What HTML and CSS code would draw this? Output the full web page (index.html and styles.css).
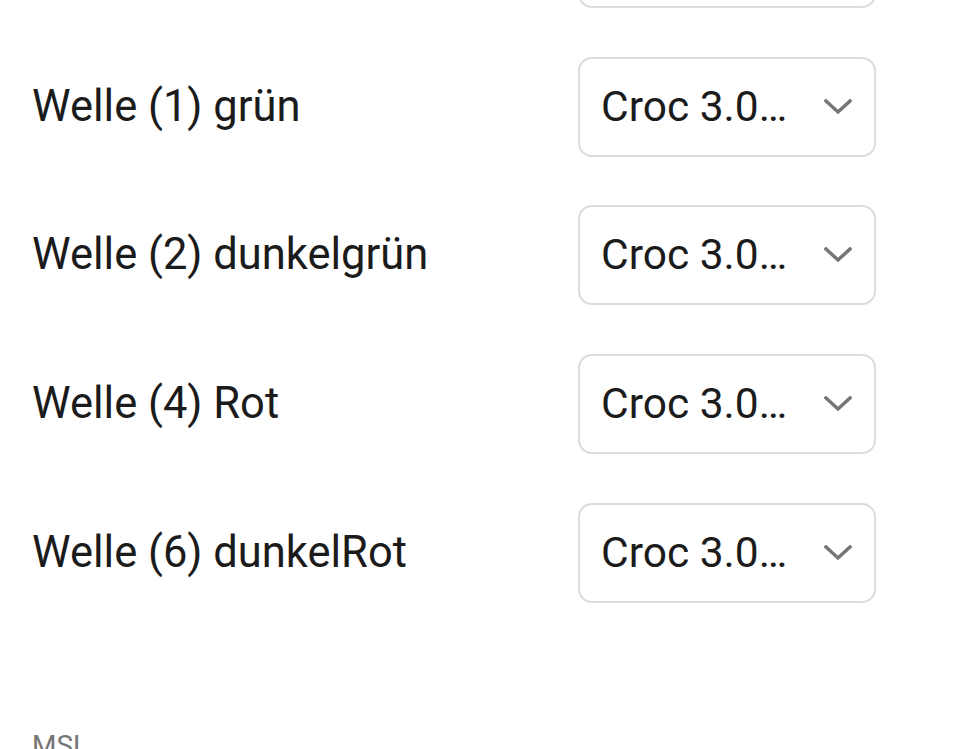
FILE: index.html
```html
<!DOCTYPE html>
<html lang="de">
<head>
<meta charset="utf-8">
<link rel="stylesheet" href="styles.css">
</head>
<body>
<div class="page">
  <div class="list">
    <div class="row">
      <div class="label">Welle (0)</div>
      <div class="select"><span class="value">Croc 3.0…</span><svg class="chev" viewBox="0 0 28 16"><path d="M2 2 L14 13 L26 2" /></svg></div>
    </div>
    <div class="row">
      <div class="label">Welle (1) grün</div>
      <div class="select"><span class="value">Croc 3.0…</span><svg class="chev" viewBox="0 0 28 16"><path d="M2 2 L14 13 L26 2" /></svg></div>
    </div>
    <div class="row">
      <div class="label">Welle (2) dunkelgrün</div>
      <div class="select"><span class="value">Croc 3.0…</span><svg class="chev" viewBox="0 0 28 16"><path d="M2 2 L14 13 L26 2" /></svg></div>
    </div>
    <div class="row">
      <div class="label">Welle (4) Rot</div>
      <div class="select"><span class="value">Croc 3.0…</span><svg class="chev" viewBox="0 0 28 16"><path d="M2 2 L14 13 L26 2" /></svg></div>
    </div>
    <div class="row">
      <div class="label">Welle (6) dunkelRot</div>
      <div class="select"><span class="value">Croc 3.0…</span><svg class="chev" viewBox="0 0 28 16"><path d="M2 2 L14 13 L26 2" /></svg></div>
    </div>
  </div>
  <div class="section">MSL</div>
</div>
</body>
</html>
```
FILE: styles.css
```css
html, body {
  margin: 0;
  padding: 0;
  background: #ffffff;
  overflow: hidden;
}
body {
  width: 968px;
  height: 749px;
  font-family: Roboto, "Noto Sans", sans-serif;
  color: #1b1b1b;
}
.page {
  margin-top: -92px;
  padding: 0 92px 0 32px;
}
.list {
  display: flex;
  flex-direction: column;
  gap: 48.67px;
}
.row {
  display: flex;
  align-items: center;
  justify-content: space-between;
  height: 100px;
}
.label {
  font-size: 43.5px;
  line-height: 50px;
}
.select {
  box-sizing: border-box;
  width: 298px;
  height: 100px;
  border: 2px solid #dcdcdc;
  border-radius: 14px;
  display: flex;
  align-items: center;
  padding: 0 22px 0 21px;
  justify-content: space-between;
}
.value {
  font-size: 42.5px;
  line-height: 50px;
}
.chev {
  width: 28px;
  height: 16px;
  fill: none;
  stroke: #767676;
  stroke-width: 3.5;
  stroke-linecap: square;
}
.section {
  margin-top: 126px;
  font-size: 28px;
  line-height: 34px;
  color: #767676;
}
```
